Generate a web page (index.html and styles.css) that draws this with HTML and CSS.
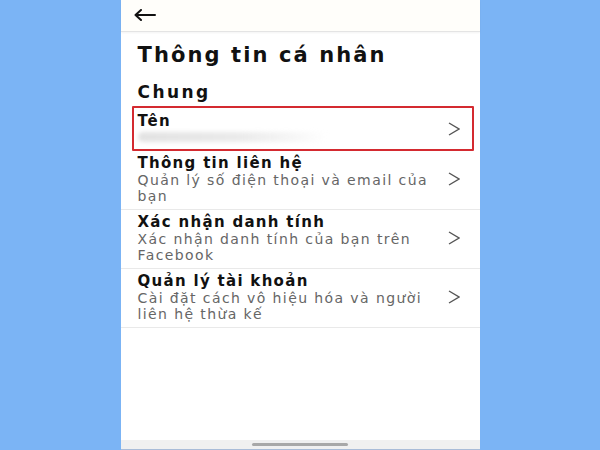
FILE: index.html
```html
<!DOCTYPE html>
<html lang="vi">
<head>
  <meta charset="UTF-8" />
  <meta name="viewport" content="width=device-width, initial-scale=1.0"/>
  <title>Thông tin cá nhân</title>
  <link rel="stylesheet" href="styles.css">
</head>
<body>

  <div class="phone">
    <div class="topbar">
      <svg class="back" width="22" height="12" viewBox="0 0 22 12">
        <path d="M21 6H1.5M7 1L1.5 6L7 11" fill="none" stroke="#111" stroke-width="2" stroke-linecap="round" stroke-linejoin="round"/>
      </svg>
    </div>

    <h1 class="title">Thông tin cá nhân</h1>
    <h2 class="section">Chung</h2>

    <div class="list">
      <div class="item selected">
        <div class="text">
          <div class="label">Tên</div>
          <div class="blurred"></div>
        </div>
        <svg class="chev" width="12" height="14" viewBox="0 0 12 14"><path d="M1 1l10 6-10 6" fill="none" stroke="#555" stroke-width="1.4"/></svg>
      </div>

      <div class="item">
        <div class="text">
          <div class="label">Thông tin liên hệ</div>
          <div class="desc">Quản lý số điện thoại và email của bạn</div>
        </div>
        <svg class="chev" width="12" height="14" viewBox="0 0 12 14"><path d="M1 1l10 6-10 6" fill="none" stroke="#555" stroke-width="1.4"/></svg>
      </div>

      <div class="item">
        <div class="text">
          <div class="label">Xác nhận danh tính</div>
          <div class="desc">Xác nhận danh tính của bạn trên Facebook</div>
        </div>
        <svg class="chev" width="12" height="14" viewBox="0 0 12 14"><path d="M1 1l10 6-10 6" fill="none" stroke="#555" stroke-width="1.4"/></svg>
      </div>

      <div class="item">
        <div class="text">
          <div class="label">Quản lý tài khoản</div>
          <div class="desc">Cài đặt cách vô hiệu hóa và người liên hệ thừa kế</div>
        </div>
        <svg class="chev" width="12" height="14" viewBox="0 0 12 14"><path d="M1 1l10 6-10 6" fill="none" stroke="#555" stroke-width="1.4"/></svg>
      </div>
    </div>

    <div class="navbar"><span class="pill"></span></div>
  </div>

</body>
</html>
```

FILE: styles.css
```css
body {
  margin: 0;
  padding: 0;
  background: #7bb4f5;
  font-family: 'DejaVu Sans', sans-serif;
  display: flex;
  justify-content: center;
  height: 450px;
  overflow: hidden;
}

.phone {
  width: 359px;
  height: 450px;
  background: #fff;
  display: flex;
  flex-direction: column;
}

.topbar {
  height: 32px;
  flex-shrink: 0;
  box-sizing: border-box;
  background: #fffefa;
  border-bottom: 1px solid #e4e4e4;
  display: flex;
  align-items: center;
  padding: 0 0 1px 13px;
  box-shadow: 0 1px 2px rgba(0, 0, 0, 0.05);
}

.title {
  margin: 10px 0 0 17px;
  font-size: 21px;
  font-weight: bold;
  color: #111;
  line-height: 26px;
  letter-spacing: 2.1px;
}

.section {
  margin: 13px 0 0 17px;
  font-size: 17px;
  font-weight: bold;
  color: #111;
  line-height: 22px;
  letter-spacing: 2.4px;
}

.list {
  margin-top: 3px;
}

.item {
  display: flex;
  align-items: center;
  padding: 3px 20px 5px 17px;
  border-bottom: 1px solid #e9e9e9;
}

.item.selected {
  box-sizing: border-box;
  height: 45px;
  margin: 0 6px 0 11px;
  padding: 4px 12px 3px 4px;
  border: 2px solid #d42a30;
  border-radius: 1px;
}

.item.selected .text {
  align-self: flex-start;
}

.text {
  flex: 1;
  min-width: 0;
}

.label {
  font-size: 15px;
  font-weight: bold;
  color: #111;
  line-height: 18px;
  letter-spacing: 1.3px;
}

.desc {
  font-size: 14px;
  color: #666;
  line-height: 16px;
  letter-spacing: 1.4px;
}

.blurred {
  margin-top: 2px;
  width: 190px;
  height: 10px;
  border-radius: 5px;
  background: linear-gradient(90deg, #e2e2e2, #ebebeb 55%, rgba(240, 240, 240, 0));
  filter: blur(2px);
}

.chev {
  flex-shrink: 0;
  margin-left: 8px;
}

.navbar {
  margin-top: auto;
  height: 9px;
  background: #f0f0f0;
  border-bottom: 1px solid #a9bcd8;
  display: flex;
  justify-content: center;
  align-items: center;
}

.pill {
  width: 96px;
  height: 3px;
  border-radius: 2px;
  background: #a8a8a8;
}
```
